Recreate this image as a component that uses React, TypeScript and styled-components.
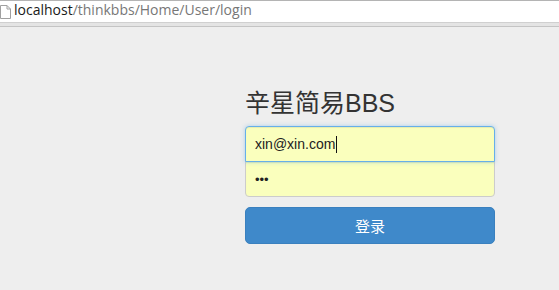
import React from "react";
import styled, { createGlobalStyle } from "styled-components";

const Global = createGlobalStyle`
  html, body {
    margin: 0;
    padding: 0;
    background: #eeeeee;
  }
  body {
    font-family: "Liberation Sans", Arial, "Noto Sans CJK SC", sans-serif;
  }
`;

const App: React.FC = () => {
  return (
    <>
      <Global />
      <AddressBar>
        <PageIcon viewBox="0 0 11 14" width="11" height="14">
          <path
            d="M0.5 0.5 H7 L10.5 4 V13.5 H0.5 Z M7 0.5 V4 H10.5"
            fill="#fff"
            stroke="#a0a0a0"
            strokeWidth="1"
          />
        </PageIcon>
        <Url>
          <Host>localhost</Host>
          <Path>/thinkbbs/Home/User/login</Path>
        </Url>
      </AddressBar>
      <BarEdge />
      <Page>
        <LoginForm>
          <Title>辛星简易BBS</Title>
          <Fields>
            <Field $top $focused>
              xin@xin.com
              <Caret />
            </Field>
            <Field>
              <Dots>•••</Dots>
            </Field>
          </Fields>
          <SubmitButton>登录</SubmitButton>
        </LoginForm>
      </Page>
    </>
  );
};

export default App;

// --- Styled Components ---
const AddressBar = styled.div`
  height: 21px;
  border-top: 1px solid #b4b4b4;
  background: #ffffff;
  display: flex;
  align-items: center;
  gap: 3px;
  padding-left: 0;
`;

const PageIcon = styled.svg`
  display: block;
  flex-shrink: 0;
  margin-top: 1px;
`;

const Url = styled.div`
  font-family: "Open Sans", "Liberation Sans", sans-serif;
  font-size: 14px;
  line-height: 20px;
  margin-top: -3px;
`;

const Host = styled.span`
  color: #1a1a1a;
`;

const Path = styled.span`
  color: #777777;
`;

const BarEdge = styled.div`
  height: 5px;
  background: #e4e4e4;
  border-top: 1px solid #d0d0d0;
  border-bottom: 1px solid #c4c4c4;
  box-sizing: border-box;
`;

const Page = styled.div`
  padding-left: 245px;
  padding-top: 59px;
`;

const LoginForm = styled.div`
  width: 250px;
  display: flex;
  flex-direction: column;
`;

const Title = styled.h2`
  margin: 0 0 6px 0;
  font-size: 25px;
  font-weight: 400;
  line-height: 34px;
  color: #333333;
  font-family: "Liberation Sans", "Noto Sans CJK SC", sans-serif;
`;

const Fields = styled.div`
  display: flex;
  flex-direction: column;
`;

const Field = styled.div<{ $top?: boolean; $focused?: boolean }>`
  position: relative;
  height: 36px;
  box-sizing: border-box;
  margin-top: ${(p) => (p.$top ? "0" : "-1px")};
  padding: 0 9px;
  display: flex;
  align-items: center;
  background: #faffbd;
  font-size: 14px;
  color: #222;
  border: 1px solid ${(p) => (p.$focused ? "#66afe9" : "#cccccc")};
  border-radius: ${(p) => (p.$top ? "4px 4px 0 0" : "0 0 4px 4px")};
  box-shadow: ${(p) =>
    p.$focused
      ? "inset 0 1px 1px rgba(0,0,0,.075), 0 0 4px rgba(102,175,233,.5)"
      : "inset 0 1px 1px rgba(0,0,0,.075)"};
  z-index: ${(p) => (p.$focused ? 2 : 1)};
`;

const Caret = styled.span`
  display: inline-block;
  width: 1px;
  height: 17px;
  background: #111;
  margin-left: 1px;
`;

const Dots = styled.span`
  font-size: 13px;
  color: #222;
`;

const SubmitButton = styled.button`
  margin-top: 10px;
  height: 37px;
  border: 1px solid #3a80be;
  border-radius: 5px;
  background: #3f89ca;
  color: #ffffff;
  font-size: 15px;
  font-family: "Noto Sans CJK SC", sans-serif;
  cursor: pointer;
`;
